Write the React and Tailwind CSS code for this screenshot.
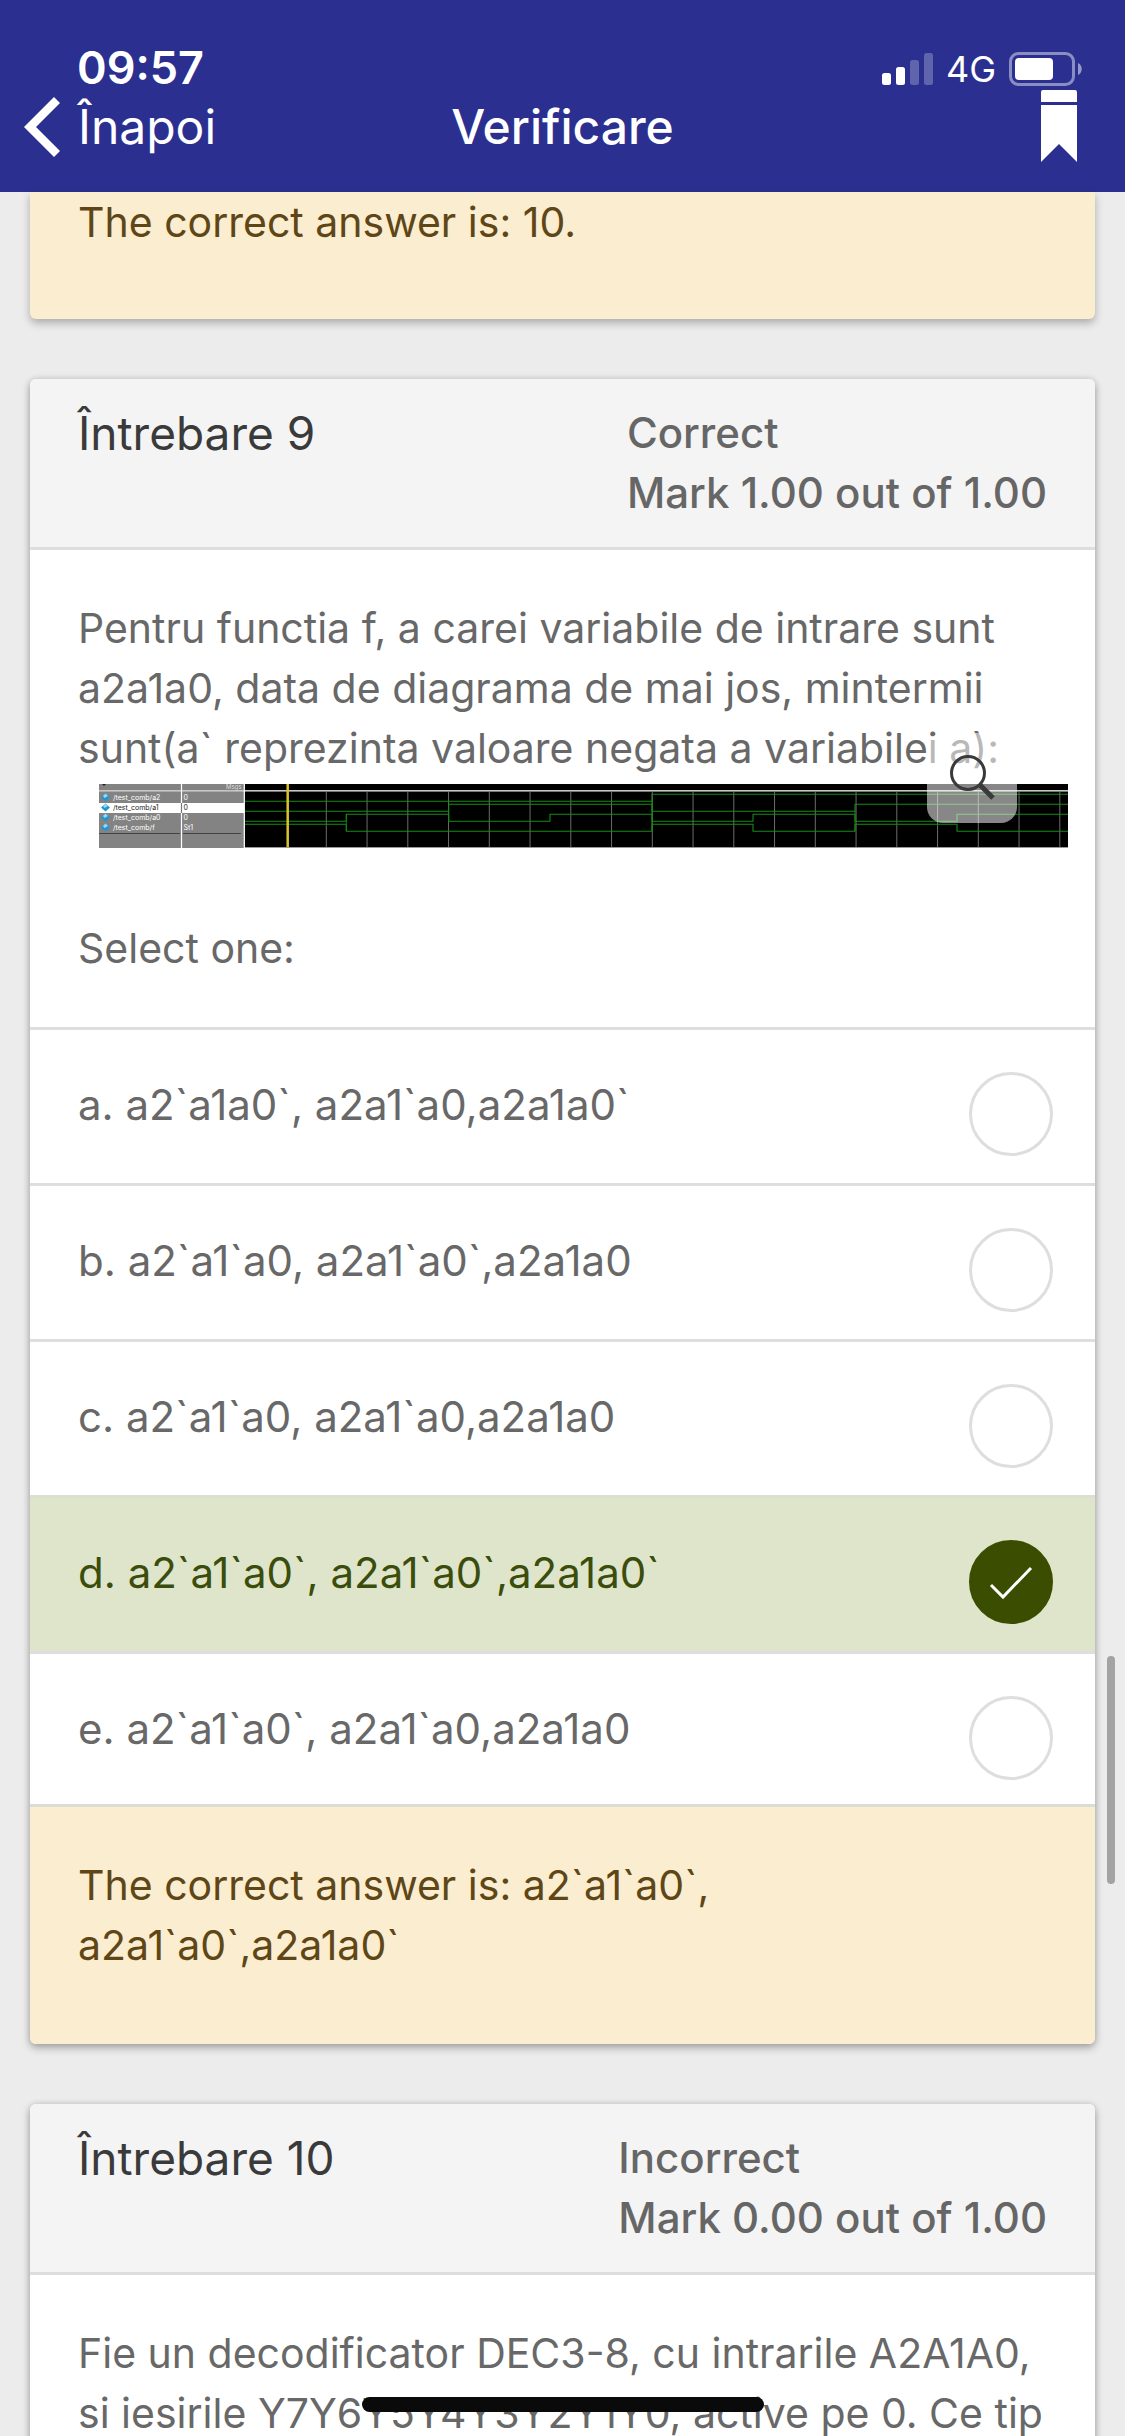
const FONT = "font-['Inter','Liberation_Sans',sans-serif]";

const OPTIONS = [
  { id: "a", text: "a. a2`a1a0`, a2a1`a0,a2a1a0`" },
  { id: "b", text: "b. a2`a1`a0, a2a1`a0`,a2a1a0" },
  { id: "c", text: "c. a2`a1`a0, a2a1`a0,a2a1a0" },
  { id: "d", text: "d. a2`a1`a0`, a2a1`a0`,a2a1a0`", correct: true },
  { id: "e", text: "e. a2`a1`a0`, a2a1`a0,a2a1a0" },
];

function Signal() {
  return (
    <svg viewBox="0 0 51 32" className="h-8 w-[51px]" fill="#fff" aria-hidden="true">
      <rect x="0" y="20" width="9" height="12" rx="2.5" />
      <rect x="14" y="14" width="9" height="18" rx="2.5" />
      <rect x="28" y="7" width="9" height="25" rx="2.5" opacity="0.25" />
      <rect x="42" y="0" width="9" height="32" rx="2.5" opacity="0.25" />
    </svg>
  );
}

function Battery() {
  return (
    <svg viewBox="0 0 74 34" className="h-[34px] w-[74px]" aria-hidden="true">
      <rect x="1.5" y="1.5" width="63" height="31" rx="8" fill="none" stroke="#fff" strokeOpacity="0.45" strokeWidth="3" />
      <rect x="6" y="6" width="38" height="22" rx="4" fill="#fff" />
      <path d="M69 11c5 2 5 10 0 12z" fill="#fff" opacity="0.5" />
    </svg>
  );
}

function TopBar() {
  return (
    <header className="bg-[#2b3090] text-white">
      <div className="flex h-[90px] items-end justify-between pr-[42px] pl-[77px]">
        <span className="text-[45px] leading-[44px] font-semibold">09:57</span>
        <div className="flex items-center gap-[13px] pb-1">
          <Signal />
          <span className="text-[36px] leading-[34px]">4G</span>
          <Battery />
        </div>
      </div>
      <div className="grid h-[102px] grid-cols-[1fr_auto_1fr] items-start">
        <button type="button" className="flex items-center gap-[18px] pt-[7px] pl-6 text-left">
          <svg viewBox="0 0 36 60" className="h-[60px] w-9" fill="#fff" aria-hidden="true">
            <path d="M30 0L36 6L12 30L36 54L30 60L0 30z" />
          </svg>
          <span className="text-[48px] leading-[60px]">Înapoi</span>
        </button>
        <h1 className="pt-[7px] text-[48px] leading-[60px] font-medium">Verificare</h1>
        <button type="button" aria-label="Bookmark" className="mr-12 justify-self-end">
          <svg viewBox="0 0 36 72" className="h-[72px] w-9" fill="#fff" aria-hidden="true">
            <path d="M2 0H34Q36 0 36 2V12H0V2Q0 0 2 0zM0 15H36V72L18 54L0 72z" />
          </svg>
        </button>
      </div>
    </header>
  );
}

function CardHeader({ title, state, mark }) {
  return (
    <div className="flex justify-between border-b-3 border-[#dedede] bg-[#f4f4f4] px-12 py-6">
      <h2 className="text-[46px] leading-[60px] text-[#3a3a3a]">{title}</h2>
      <p className="text-[42px] leading-[60px] font-medium text-[#666666]">
        {state}
        <br />
        {mark}
      </p>
    </div>
  );
}

const ROWS = [
  { name: "/test_comb/a2", value: "0", y: 17, color: "#fff" },
  { name: "/test_comb/a1", value: "0", y: 27, color: "#222" },
  { name: "/test_comb/a0", value: "0", y: 37, color: "#fff" },
  { name: "/test_comb/f", value: "St1", y: 47, color: "#fff" },
];
const GRID = Array.from({ length: 19 }, (_, i) => 227.3 + i * 40.75);

function Waveform() {
  return (
    <svg viewBox="0 0 969 64" className="block h-auto w-full" role="img" aria-label="Diagrama de semnale">
      <rect width="969" height="64" fill="#000" />
      <rect width="146" height="64" fill="#838383" />
      <rect y="19" width="145" height="10" fill="#fff" />
      <rect y="6" width="969" height="1.6" fill="#c6c6c6" />
      <path d="M3 0h4l-2 2z" fill="#222" />
      <path d="M0 49.5H81M84 49.5H142" stroke="#444" strokeWidth="1" />
      <path d="M82.5 0V64M145.3 0V64" stroke="#fff" strokeWidth="1.2" />
      <path d="M82.5 19V29" stroke="#777" strokeWidth="1.2" />
      <text x="127" y="5" fontSize="6" fill="#ddd" className={FONT}>Msgs</text>
      {ROWS.map((r) => (
        <g key={r.name} className={FONT} fontSize="7" fill={r.color}>
          <path d={`M6.500 ${r.y - 7.5}l4.500 4l-4.500 4l-4.500 -4z`} fill="#2496cf" />
          <path d={`M6.500 ${r.y - 7.5}l2.500 2.500l-3.500 2l-1.500 -2z`} fill="#8fdcf8" />
          <text x="14" y={r.y - 1}>{r.name}</text>
          <text x="84.500" y={r.y - 1}>{r.value}</text>
        </g>
      ))}
      {GRID.map((x) => (
        <path key={x} d={`M${x} 8V64`} stroke="#6d6d6d" strokeWidth="1" />
      ))}
      <g fill="none" stroke="#178a17" strokeWidth="1.1">
        <path d="M146 17.300H553V10.300H969" />
        <path d="M146 27.300H349.700V20.300H553V27.300H756V20.300H969" />
        <path d="M146 37.300H247.300V30.300H349.700V37.300H451V30.300H553V37.300H654V30.300H756V37.300H858V30.300H969" />
        <path d="M146 40.300H247.300V47.300H553V40.300H654V47.300H756V40.300H858V47.300H969" />
        <path d="M349.700 27V37M553 17V47M756 27V47M247.300 30V47" strokeWidth="0.8" />
      </g>
      <path d="M188.700 0V64" stroke="#d8c32a" strokeWidth="2.500" />
      <path d="M146 63.500H969" stroke="#999" strokeWidth="1" />
    </svg>
  );
}

function Option({ option }) {
  return (
    <label
      className={
        option.correct
          ? "flex items-start justify-between border-t-3 border-[#dadfd0] bg-[#dfe5cb] pt-[42px] pr-[42px] pb-[27px] pl-12 text-[#3b4d0c]"
          : "flex items-start justify-between border-t-3 border-[#dedede] pt-[42px] pr-[42px] pb-[27px] pl-12 text-[#686868] last:pb-6"
      }
    >
      <span className="pt-[3px] text-[42px] leading-[60px]">{option.text}</span>
      <span className="grid">
        <input
          type="radio"
          name="answer"
          value={option.id}
          defaultChecked={option.correct}
          className="col-start-1 row-start-1 size-[84px] appearance-none rounded-full border-3 border-[#dedede] bg-white checked:border-[#3a4d00] checked:bg-[#3a4d00]"
        />
        {option.correct && (
          <svg viewBox="0 0 84 84" className="pointer-events-none col-start-1 row-start-1 size-[84px]" aria-hidden="true">
            <path d="M22 45L34 57L62 28" fill="none" stroke="#fff" strokeWidth="3" />
          </svg>
        )}
      </span>
    </label>
  );
}

const CARD = "overflow-hidden rounded-md bg-white shadow-[0_4px_8px_rgba(0,0,0,0.28),0_0_6px_rgba(0,0,0,0.14)]";

export default function App() {
  return (
    <div className={`relative h-screen overflow-hidden bg-[#ececec] ${FONT}`}>
      <TopBar />
      <main className="flex flex-col gap-[60px] px-[30px]">
        <section className="rounded-b-md bg-[#faedd0] px-12 pb-[67px] text-[#5f4616] shadow-[0_4px_8px_rgba(0,0,0,0.28)]">
          <p className="text-[41px] leading-[60px]">The correct answer is: 10.</p>
        </section>

        <section className={CARD}>
          <CardHeader title="Întrebare 9" state="Correct" mark="Mark 1.00 out of 1.00" />
          <div className="relative px-12 pt-12 pb-[49px] text-[#686868]">
            <p className="text-[41px] leading-[60px]">
              Pentru functia f, a carei variabile de intrare sunt a2a1a0, data de diagrama de mai jos, mintermii
              <br />
              sunt(a` reprezinta valoare negata a variabilei a):
            </p>
            <div className="-mr-[21px] ml-[21px] pt-[6px] pb-[70px]">
              <Waveform />
            </div>
            <button
              type="button"
              aria-label="Mărește imaginea"
              className="absolute top-[183px] right-[78px] size-[90px] rounded-2xl bg-white/53"
            >
              <svg viewBox="0 0 90 90" className="size-[90px]" fill="none" stroke="#3a3a3a" aria-hidden="true">
                <circle cx="41" cy="40" r="16.500" strokeWidth="3" />
                <path d="M53 52L66 65" strokeWidth="5" />
              </svg>
            </button>
            <p className="text-[41px] leading-[60px]">Select one:</p>
          </div>
          <div>
            {OPTIONS.map((o) => (
              <Option key={o.id} option={o} />
            ))}
          </div>
          <div className="border-t-3 border-[#dcdcd6] bg-[#faedd0] px-12 pt-12 pb-[69px] text-[#5f4616]">
            <p className="text-[41px] leading-[60px]">
              The correct answer is: a2`a1`a0`,
              <br />
              a2a1`a0`,a2a1a0`
            </p>
          </div>
        </section>

        <section className={CARD}>
          <CardHeader title="Întrebare 10" state="Incorrect" mark="Mark 0.00 out of 1.00" />
          <div className="px-12 py-12 text-[#686868]">
            <p className="text-[41px] leading-[60px]">
              Fie un decodificator DEC3-8, cu intrarile A2A1A0,
              <br />
              si iesirile Y7Y6Y5Y4Y3Y2Y1Y0, active pe 0. Ce tip
            </p>
          </div>
        </section>
      </main>
      <div className="absolute top-[68%] right-[10px] h-[228px] w-2 rounded-full bg-[#a3a3a3]" />
      <div className="absolute bottom-6 left-1/2 h-[15px] w-[402px] -translate-x-1/2 rounded-full bg-[#0a0a0a]" />
    </div>
  );
}
